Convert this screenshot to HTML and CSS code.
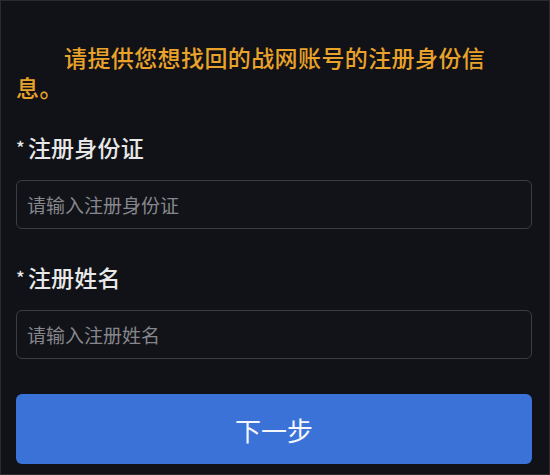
FILE: index.html
```html
<!DOCTYPE html>
<html lang="zh-CN">
<head>
    <meta charset="UTF-8">
    <meta name="viewport" content="width=device-width, initial-scale=1.0">
    <title>找回战网账号</title>
    <link rel="stylesheet" href="styles.css">
</head>
<body>
    <main class="page">
        <p class="notice">请提供您想找回的战网账号的注册身份信息。</p>

        <form class="recover-form">
            <div class="field">
                <label for="idInput"><span class="req">*</span>注册身份证</label>
                <input type="text" id="idInput" placeholder="请输入注册身份证">
            </div>
            <div class="field">
                <label for="nameInput"><span class="req">*</span>注册姓名</label>
                <input type="text" id="nameInput" placeholder="请输入注册姓名">
            </div>
            <button type="button" class="next-button">下一步</button>
        </form>
    </main>
</body>
</html>
```

FILE: styles.css
```css
/* Global Styles */
html, body {
    margin: 0;
    height: 100%;
}

body {
    background-color: #111217;
    font-family: "Noto Sans CJK SC", "Noto Sans", sans-serif;
    color: #e6e6e6;
}

.page {
    box-sizing: border-box;
    height: 475px;
    border: 1px solid #2a2b30;
    padding: 41px 17px 0 15px;
}

/* Orange hint */
.notice {
    margin: 0 40px 30px 0;
    font-size: 23px;
    letter-spacing: 0.4px;
    line-height: 30px;
    font-weight: 500;
    text-indent: 48px;
    color: #e9a22a;
}

/* Form */
.field + .field {
    margin-top: 33px;
}

label {
    display: block;
    font-size: 23px;
    line-height: 30px;
    font-weight: 500;
    letter-spacing: 0.2px;
    margin-bottom: 18px;
    color: #e8e8e8;
}

.req {
    font-size: 18px;
    margin-right: 3px;
    vertical-align: 2px;
}

input[type="text"] {
    box-sizing: border-box;
    display: block;
    width: 100%;
    height: 49px;
    padding: 0 10px;
    font-family: inherit;
    font-size: 19px;
    color: #e6e6e6;
    background-color: #121318;
    border: 1.5px solid #3c3d42;
    border-radius: 6px;
    outline: none;
}

input[type="text"]::placeholder {
    color: #86878c;
}

.next-button {
    display: block;
    width: 100%;
    height: 70px;
    margin-top: 35px;
    font-family: inherit;
    font-size: 26px;
    color: #f4f6fb;
    background-color: #3a72d8;
    border: none;
    border-radius: 6px;
    cursor: pointer;
}
```
